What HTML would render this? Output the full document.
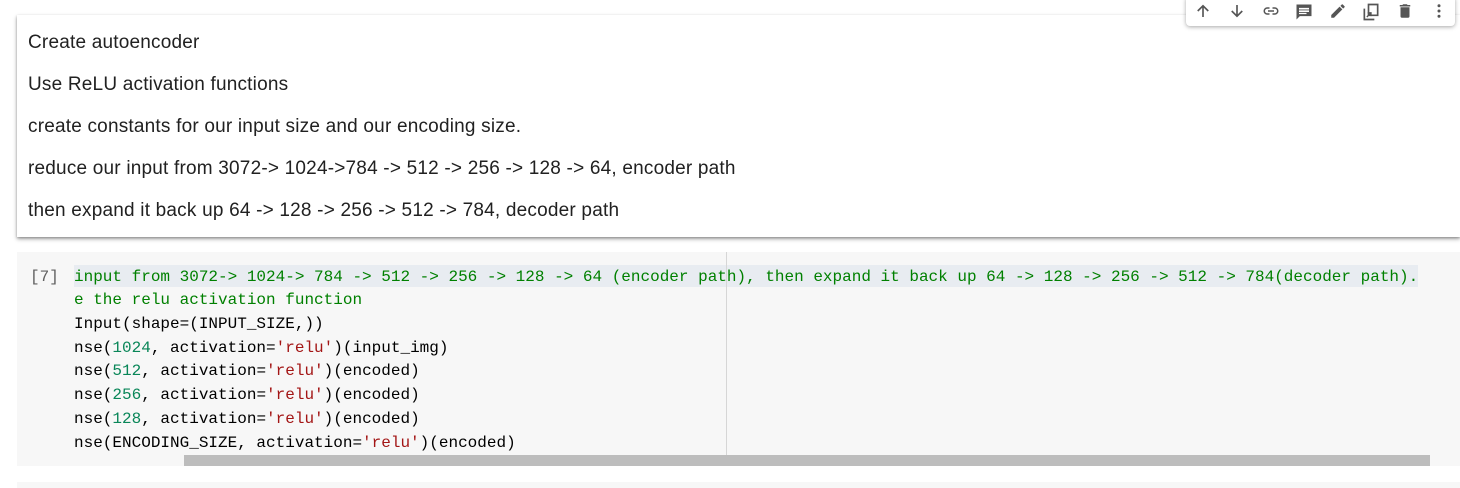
<!DOCTYPE html>
<html><head><style>
body{margin:0;width:1460px;height:488px;background:#fff;position:relative;overflow:hidden;font-family:"Liberation Sans",sans-serif}
.md{position:absolute;left:17px;top:15px;width:1443px;height:222px;background:#fff;box-shadow:0 2px 4px rgba(0,0,0,.35),0 1px 2px rgba(0,0,0,.2)}
.md p{position:absolute;left:11px;margin:0;font-size:19px;letter-spacing:0.2px;color:#212121;line-height:22px}
.tb{position:absolute;left:1186px;top:-4px;width:269px;height:30px;background:#fff;border-radius:4px;box-shadow:0 1px 4px rgba(0,0,0,.35)}
.tb svg{position:absolute;top:6px}
.code{position:absolute;left:17px;top:252px;width:1443px;height:214px;background:#f7f7f7}
.num{position:absolute;left:30px;top:266px;font:16px "Liberation Mono",monospace;color:#616161;line-height:23px}
.hl{position:absolute;left:74px;top:265px;width:1344px;height:22px;background:#e8ecf1}
.ln{position:absolute;left:74px;font:16px "Liberation Mono",monospace;white-space:pre;color:#000;line-height:22px}
.c{color:#008000}.n{color:#098658}.s{color:#a31515}
.ruler{position:absolute;left:726px;top:252px;width:1px;height:214px;background:#d6d6d6}
.sb{position:absolute;left:184px;top:455px;width:1246px;height:11px;background:#bdbdbd}
.b2{position:absolute;left:17px;top:482px;width:1443px;height:6px;background:#f7f7f7}
</style></head><body>
<div class="md">
<p style="top:17px">Create autoencoder</p>
<p style="top:59px">Use ReLU activation functions</p>
<p style="top:101px">create constants for our input size and our encoding size.</p>
<p style="top:143px">reduce our input from 3072-&gt; 1024-&gt;784 -&gt; 512 -&gt; 256 -&gt; 128 -&gt; 64, encoder path</p>
<p style="top:185px">then expand it back up 64 -&gt; 128 -&gt; 256 -&gt; 512 -&gt; 784, decoder path</p>
</div>
<div class="tb">
<svg style="left:8px" width="18" height="18" viewBox="0 0 24 24"><path d="M12 20V5M5 12l7-7 7 7" stroke="#555" stroke-width="2.2" fill="none"/></svg>
<svg style="left:42px" width="18" height="18" viewBox="0 0 24 24"><path d="M12 4v15M5 12l7 7 7-7" stroke="#555" stroke-width="2.2" fill="none"/></svg>
<svg style="left:75px" width="20" height="18" viewBox="0 0 24 24"><path d="M10 8H7a4 4 0 000 8h3M14 8h3a4 4 0 010 8h-3M8 12h8" stroke="#555" stroke-width="2" fill="none"/></svg>
<svg style="left:108px" width="20" height="20" viewBox="0 0 24 24"><path d="M3 3h18v14H7l-4 4zM6 7h12v2H6zm0 3h12v2H6zm0 3h9v1.5H6z" fill="#555" fill-rule="evenodd"/></svg>
<svg style="left:143px" width="18" height="18" viewBox="0 0 24 24"><path d="M3 17.3V21h3.7L17.8 9.9l-3.7-3.7zM20.7 7a1 1 0 000-1.4l-2.3-2.3a1 1 0 00-1.4 0l-1.8 1.8 3.7 3.7z" fill="#555"/></svg>
<svg style="left:175px" width="20" height="20" viewBox="0 0 24 24"><path d="M9 3h11v13H9zM4 8v13h12" stroke="#555" stroke-width="2" fill="none"/><path d="M7 18l5-5M8 13h4v4" stroke="#555" stroke-width="1.6" fill="none"/></svg>
<svg style="left:210px" width="18" height="18" viewBox="0 0 24 24"><path d="M6 19a2 2 0 002 2h8a2 2 0 002-2V7H6zM19 4h-3.5l-1-1h-5l-1 1H5v2h14z" fill="#555"/></svg>
<svg style="left:244px" width="18" height="18" viewBox="0 0 24 24"><circle cx="12" cy="5" r="2" fill="#555"/><circle cx="12" cy="12" r="2" fill="#555"/><circle cx="12" cy="19" r="2" fill="#555"/></svg>
</div>
<div class="code"></div>
<div class="hl"></div>
<div class="ruler"></div>
<div class="num">[7]</div>
<div class="ln c" style="top:266px">input from 3072-&gt; 1024-&gt; 784 -&gt; 512 -&gt; 256 -&gt; 128 -&gt; 64 (encoder path), then expand it back up 64 -&gt; 128 -&gt; 256 -&gt; 512 -&gt; 784(decoder path).</div>
<div class="ln c" style="top:289px">e the relu activation function</div>
<div class="ln" style="top:313px">Input(shape=(INPUT_SIZE,))</div>
<div class="ln" style="top:337px">nse(<span class="n">1024</span>, activation=<span class="s">'relu'</span>)(input_img)</div>
<div class="ln" style="top:360px">nse(<span class="n">512</span>, activation=<span class="s">'relu'</span>)(encoded)</div>
<div class="ln" style="top:384px">nse(<span class="n">256</span>, activation=<span class="s">'relu'</span>)(encoded)</div>
<div class="ln" style="top:408px">nse(<span class="n">128</span>, activation=<span class="s">'relu'</span>)(encoded)</div>
<div class="ln" style="top:432px">nse(ENCODING_SIZE, activation=<span class="s">'relu'</span>)(encoded)</div>
<div class="sb"></div>
<div class="b2"></div>
</body></html>
